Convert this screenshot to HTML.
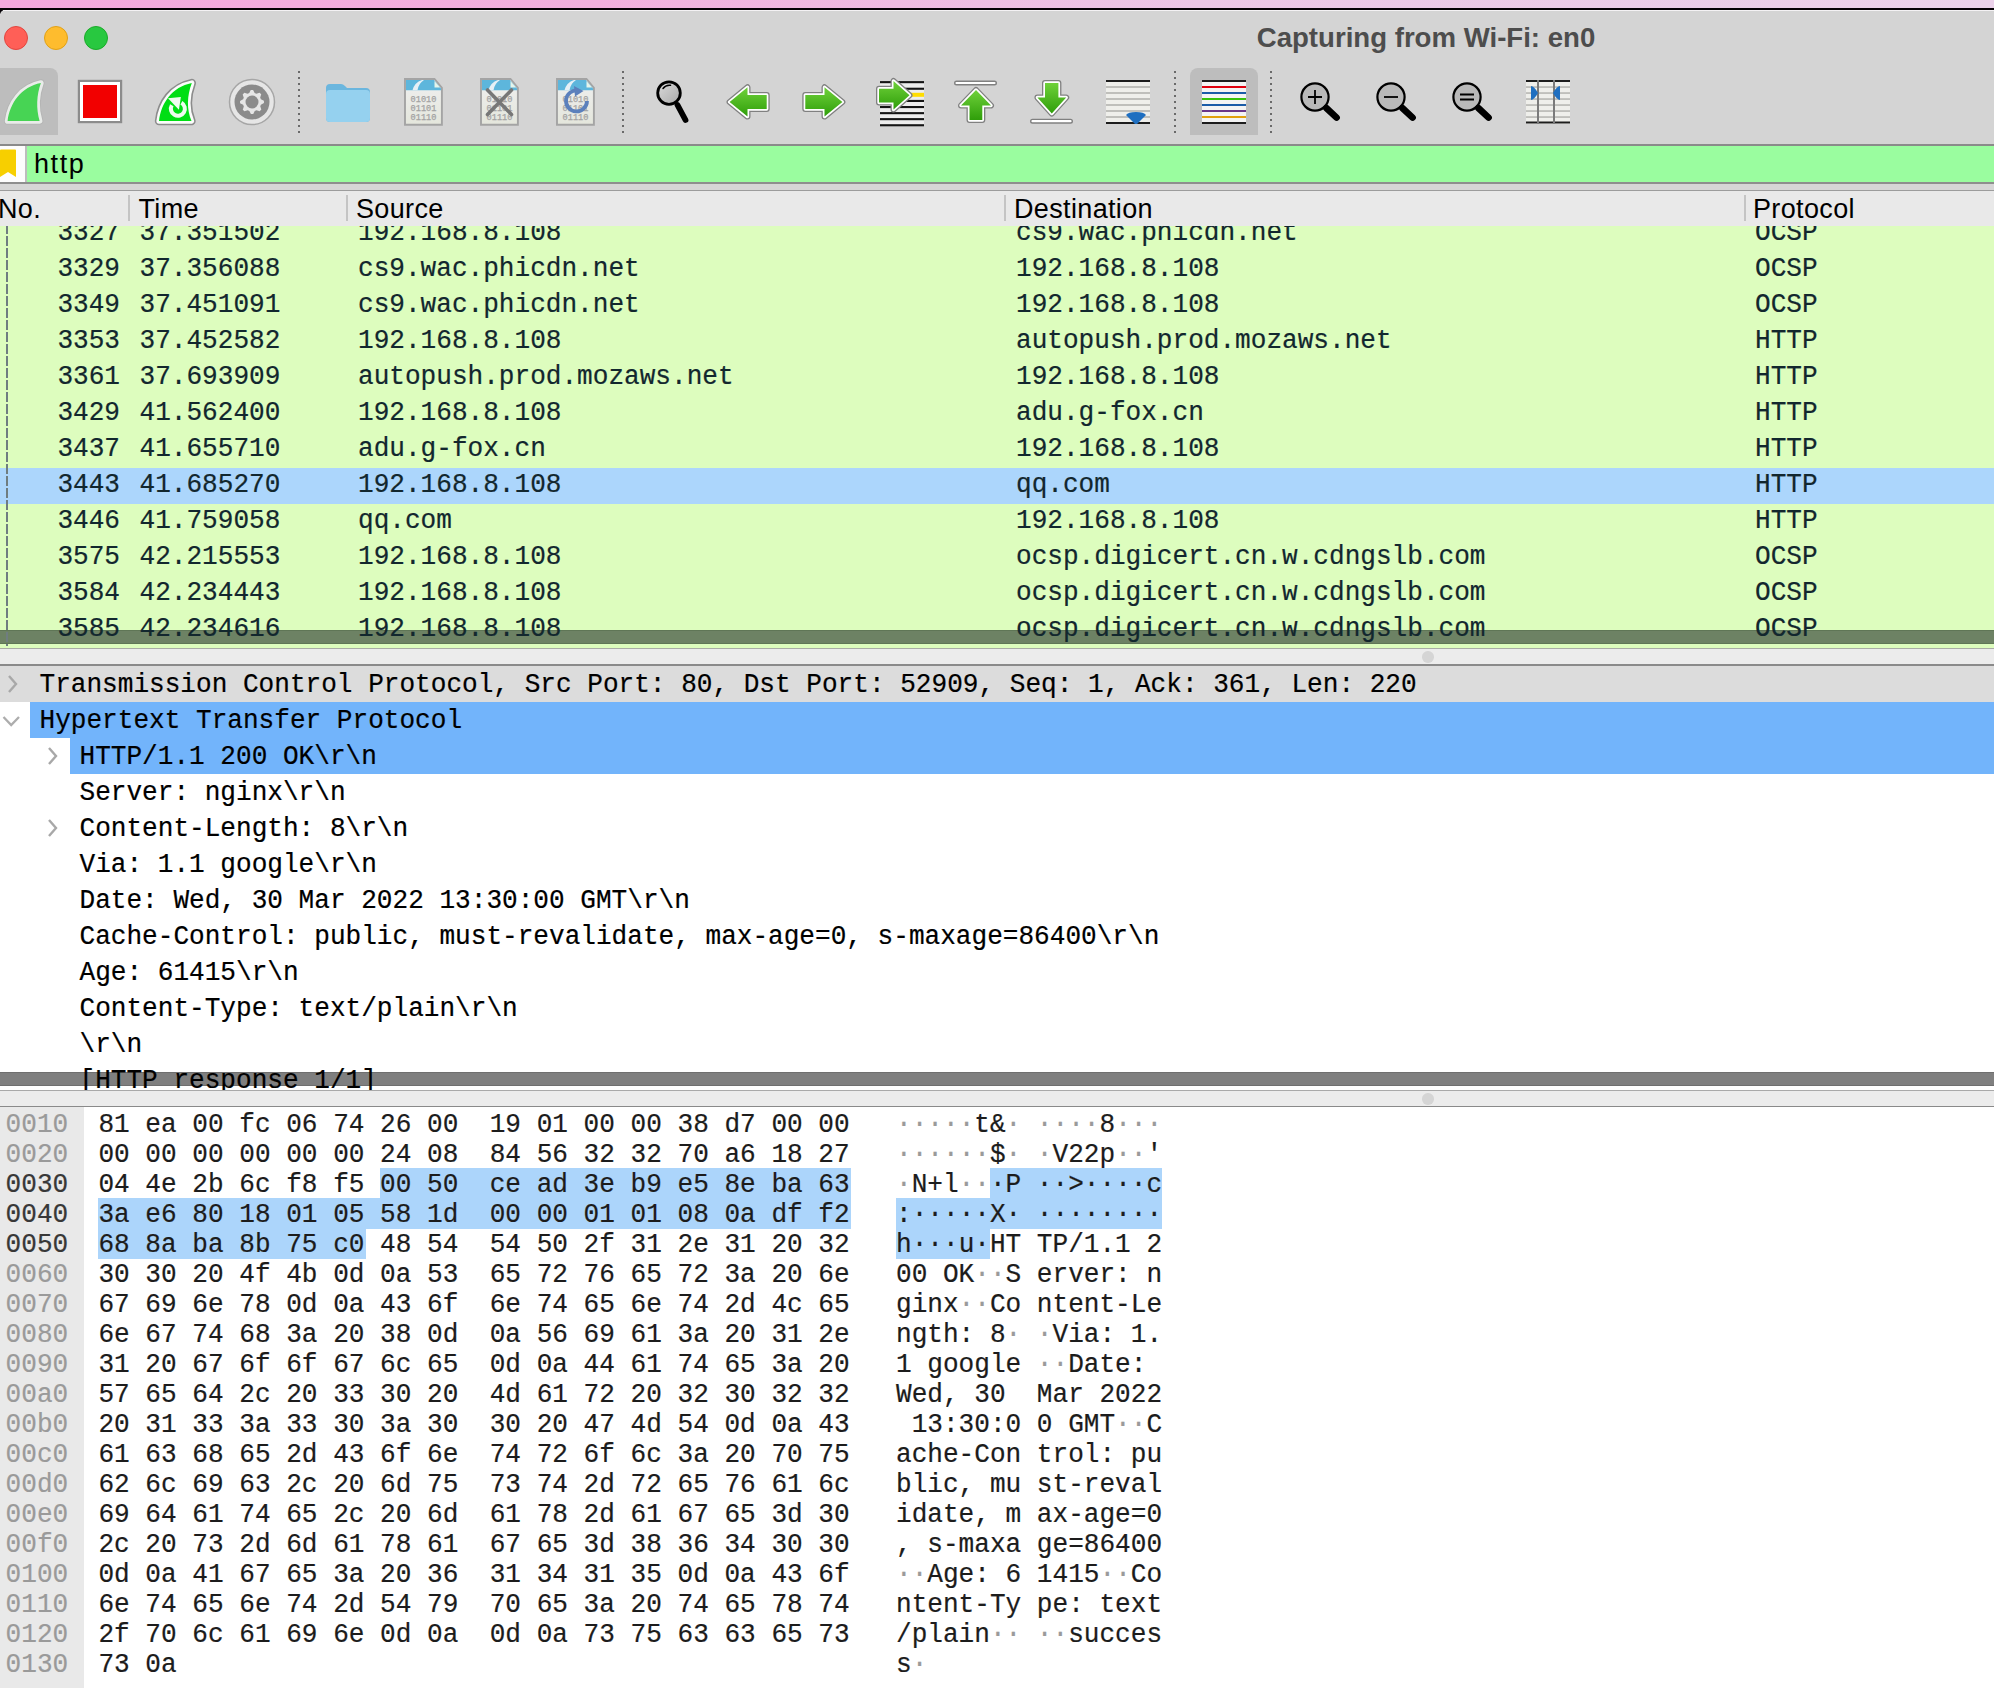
<!DOCTYPE html>
<html><head><meta charset="utf-8"><title>Wireshark</title><style>
html,body{margin:0;padding:0}
body{width:1994px;height:1688px;position:relative;overflow:hidden;background:#fff;font-family:"Liberation Sans",sans-serif}
.a{position:absolute}
</style></head><body>
<div class="a" style="left:0;top:0;width:1994px;height:8px;background:linear-gradient(90deg,#f4a8de 0%,#f2b0de 30%,#ecc6e6 60%,#ebd1ea 100%)"></div>
<div class="a" style="left:0;top:7.8px;width:1994px;height:6px;background:#050005"></div>
<div class="a" style="left:0;top:10px;width:1994px;height:134px;background:#d4d4d4;border-top-left-radius:5px;border-top-right-radius:0"></div>
<div class="a" style="left:3px;top:10px;width:1991px;height:1.2px;background:#f4f2f4"></div>
<div class="a" style="left:4px;top:26px;width:22px;height:22px;border-radius:50%;background:#ff5f57;border:1px solid #e2463f"></div>
<div class="a" style="left:44px;top:26px;width:22px;height:22px;border-radius:50%;background:#febc2e;border:1px solid #e1a116"></div>
<div class="a" style="left:84px;top:26px;width:22px;height:22px;border-radius:50%;background:#28c840;border:1px solid #1aab29"></div>
<div class="a" style="left:1201px;top:21.5px;width:450px;height:36px;line-height:36px;text-align:center;font:bold 27.6px 'Liberation Sans',sans-serif;color:#4d4d4d" id="title">Capturing from Wi-Fi: en0</div>
<div class="a" style="left:0;top:68px;width:58px;height:67px;background:#bdbdbd;border-radius:0 8px 0 0"></div>
<div class="a" style="left:1190px;top:68px;width:68px;height:67px;background:#bdbdbd;border-radius:8px 8px 0 0"></div>
<div class="a" style="left:298px;top:70.5px;width:2px;height:62px;background:repeating-linear-gradient(180deg,#6a6a6a 0,#6a6a6a 2px,transparent 2px,transparent 6px)"></div>
<div class="a" style="left:622px;top:70.5px;width:2px;height:62px;background:repeating-linear-gradient(180deg,#6a6a6a 0,#6a6a6a 2px,transparent 2px,transparent 6px)"></div>
<div class="a" style="left:1174px;top:70.5px;width:2px;height:62px;background:repeating-linear-gradient(180deg,#6a6a6a 0,#6a6a6a 2px,transparent 2px,transparent 6px)"></div>
<div class="a" style="left:1270px;top:70.5px;width:2px;height:62px;background:repeating-linear-gradient(180deg,#6a6a6a 0,#6a6a6a 2px,transparent 2px,transparent 6px)"></div>
<svg class="a" style="left:0;top:0" width="1" height="1"><defs><linearGradient id="gg" x1="0" y1="0" x2="0" y2="1"><stop offset="0" stop-color="#6fd13a"/><stop offset="1" stop-color="#2f9e0a"/></linearGradient><linearGradient id="mg" x1="0" y1="0" x2="0" y2="1"><stop offset="0" stop-color="#d8d8d8"/><stop offset="1" stop-color="#a8a8a8"/></linearGradient></defs></svg>
<svg class="a" style="left:1px;top:77px" width="48" height="50" viewBox="0 0 48 50"><path d="M6.6 43.9 C9 26 20 10 39.9 6.1 C35.5 18 35 32 38.6 43.9 Z" fill="none" stroke="#b4b4b4" stroke-width="7.4" stroke-linejoin="round"/><path d="M6.6 43.9 C9 26 20 10 39.9 6.1 C35.5 18 35 32 38.6 43.9 Z" fill="none" stroke="#e9ece9" stroke-width="5.6" stroke-linejoin="round"/><path d="M6.6 43.9 C9 26 20 10 39.9 6.1 C35.5 18 35 32 38.6 43.9 Z" fill="#47d454"/></svg>
<div class="a" style="left:78.2px;top:79.9px;width:33.3px;height:33.3px;background:#f20000;border:3.5px solid #fff;box-shadow:0 0 0 2.2px #8c8c8c;left:80.4px;top:82.1px"></div>
<svg class="a" style="left:151px;top:76px" width="50" height="52" viewBox="0 0 50 52"><path d="M8 45.1 C10 27 21 11 40.8 7 C36 20 35.5 33 40.5 45.1 Z" fill="none" stroke="#8c8c8c" stroke-width="8.4" stroke-linejoin="round"/><path d="M8 45.1 C10 27 21 11 40.8 7 C36 20 35.5 33 40.5 45.1 Z" fill="none" stroke="#fbfdfb" stroke-width="5.2" stroke-linejoin="round"/><path d="M8 45.1 C10 27 21 11 40.8 7 C36 20 35.5 33 40.5 45.1 Z" fill="#00de14"/><path d="M30.4 26.7 A7 7 0 1 1 20.8 29.3" fill="none" stroke="#effcef" stroke-width="4"/><path d="M17 22.2 L29.9 20.9 L27.9 33.8 Z" fill="#effcef"/></svg>
<svg class="a" style="left:228px;top:78px" width="48" height="48" viewBox="0 0 48 48"><circle cx="24" cy="24" r="22.5" fill="#e6e6e6" stroke="#a6a6a6" stroke-width="1.5"/><circle cx="24" cy="24" r="17.5" fill="#8b8b8b"/><polygon points="24.00,12.00 26.34,12.23 27.56,15.41 29.17,16.27 32.49,15.51 33.98,17.33 32.59,20.44 33.12,22.19 36.00,24.00 35.77,26.34 32.59,27.56 31.73,29.17 32.49,32.49 30.67,33.98 27.56,32.59 25.81,33.12 24.00,36.00 21.66,35.77 20.44,32.59 18.83,31.73 15.51,32.49 14.02,30.67 15.41,27.56 14.88,25.81 12.00,24.00 12.23,21.66 15.41,20.44 16.27,18.83 15.51,15.51 17.33,14.02 20.44,15.41 22.19,14.88" fill="#e6e6e6" transform="rotate(-6 24 24)"/><circle cx="24" cy="24" r="6.5" fill="#8b8b8b"/></svg>
<svg class="a" style="left:324px;top:82px" width="48" height="42" viewBox="0 0 48 42"><path d="M2 6 Q2 2 6 2 L17 2 Q19 2 21 4 L23 6 L42 6 Q46 6 46 10 L46 36 Q46 40 42 40 L6 40 Q2 40 2 36 Z" fill="#6bb6de"/><path d="M2 12 Q2 8 6 8 L42 8 Q46 8 46 12 L46 36 Q46 40 42 40 L6 40 Q2 40 2 36 Z" fill="#95d1ef"/></svg>
<svg class="a" style="left:403px;top:77px" width="41" height="50" viewBox="0 0 41 50"><defs><linearGradient id="pg" x1="0" y1="0" x2="0" y2="1"><stop offset="0" stop-color="#efefef"/><stop offset="1" stop-color="#e4e6dc"/></linearGradient></defs><path d="M2 2 L31.5 2 L38.9 10.9 L38.9 47.8 L2 47.8 Z" fill="url(#pg)" stroke="#a4a4a4" stroke-width="1.9" stroke-linejoin="miter"/><path d="M3 3 L31 3 L38 11.5 L38 13.2 L3 13.2 Z" fill="#5db6dc"/><path d="M31.5 4 L31.5 10.5 L37 10.5 Z" fill="#e6f4ea"/><path d="M9.5 13.2 Q11.5 5.5 19 3 L21 3 Q15.5 6.5 14.5 13.2 Z" fill="#e6f0f6"/><g font-family="Liberation Mono" font-size="8.6" fill="#a2a2a2" stroke="#a2a2a2" stroke-width="0.25"><text x="7.6" y="24.9">01010</text><text x="7.6" y="34.1">01101</text><text x="7.6" y="43.2">01110</text></g></svg>
<svg class="a" style="left:479px;top:77px" width="41" height="50" viewBox="0 0 41 50"><defs><linearGradient id="pg" x1="0" y1="0" x2="0" y2="1"><stop offset="0" stop-color="#efefef"/><stop offset="1" stop-color="#e4e6dc"/></linearGradient></defs><path d="M2 2 L31.5 2 L38.9 10.9 L38.9 47.8 L2 47.8 Z" fill="url(#pg)" stroke="#a4a4a4" stroke-width="1.9" stroke-linejoin="miter"/><path d="M3 3 L31 3 L38 11.5 L38 13.2 L3 13.2 Z" fill="#5db6dc"/><path d="M31.5 4 L31.5 10.5 L37 10.5 Z" fill="#e6f4ea"/><path d="M9.5 13.2 Q11.5 5.5 19 3 L21 3 Q15.5 6.5 14.5 13.2 Z" fill="#e6f0f6"/><g font-family="Liberation Mono" font-size="8.6" fill="#a2a2a2" stroke="#a2a2a2" stroke-width="0.25"><text x="7.6" y="24.9">01010</text><text x="7.6" y="34.1">01101</text><text x="7.6" y="43.2">01110</text></g><path d="M8.5 13 L32.5 37.5 M32.5 13 L8.5 37.5" stroke="#777" stroke-width="3.6" stroke-linecap="round"/></svg>
<svg class="a" style="left:555px;top:77px" width="41" height="50" viewBox="0 0 41 50"><defs><linearGradient id="pg" x1="0" y1="0" x2="0" y2="1"><stop offset="0" stop-color="#efefef"/><stop offset="1" stop-color="#e4e6dc"/></linearGradient></defs><path d="M2 2 L31.5 2 L38.9 10.9 L38.9 47.8 L2 47.8 Z" fill="url(#pg)" stroke="#a4a4a4" stroke-width="1.9" stroke-linejoin="miter"/><path d="M3 3 L31 3 L38 11.5 L38 13.2 L3 13.2 Z" fill="#5db6dc"/><path d="M31.5 4 L31.5 10.5 L37 10.5 Z" fill="#e6f4ea"/><path d="M9.5 13.2 Q11.5 5.5 19 3 L21 3 Q15.5 6.5 14.5 13.2 Z" fill="#e6f0f6"/><g font-family="Liberation Mono" font-size="8.6" fill="#a2a2a2" stroke="#a2a2a2" stroke-width="0.25"><text x="7.6" y="24.9">01010</text><text x="7.6" y="34.1">01101</text><text x="7.6" y="43.2">01110</text></g><path d="M23 13.5 A10.5 10.5 0 1 0 32 24" fill="none" stroke="#5b80bc" stroke-width="3.8"/><path d="M19 9 L28.5 14 L20 19.5 Z" fill="#5b80bc"/></svg>
<svg class="a" style="left:0;top:0" width="1" height="1"><defs><linearGradient id="lens" x1="0" y1="0" x2="1" y2="1"><stop offset="0" stop-color="#dcdcdc"/><stop offset="1" stop-color="#a8a8a8"/></linearGradient></defs></svg>
<svg class="a" style="left:650px;top:75px" width="42" height="52" viewBox="0 0 42 52"><circle cx="19" cy="18.1" r="11.3" fill="url(#lens)" stroke="#000" stroke-width="2.8"/><path d="M13 13.5 A8 8 0 0 1 20.5 10.3" fill="none" stroke="#000" stroke-width="1.5" stroke-linecap="round"/><path d="M27.5 30 L35.5 45" stroke="#000" stroke-width="5.8" stroke-linecap="round"/></svg>
<svg class="a" style="left:724px;top:82px" width="48" height="40" viewBox="0 0 48 40"><path d="M5.6 20 L23.5 5.3 L23.5 13 L42.7 13 L42.7 27 L23.5 27 L23.5 34.6 Z" fill="none" stroke="#808080" stroke-width="6" stroke-linejoin="round"/><path d="M5.6 20 L23.5 5.3 L23.5 13 L42.7 13 L42.7 27 L23.5 27 L23.5 34.6 Z" fill="none" stroke="#ffffff" stroke-width="3.4" stroke-linejoin="round"/><path d="M5.6 20 L23.5 5.3 L23.5 13 L42.7 13 L42.7 27 L23.5 27 L23.5 34.6 Z" fill="url(#gg)"/></svg>
<svg class="a" style="left:800px;top:82px" width="48" height="40" viewBox="0 0 48 40"><path d="M42.4 20 L24.5 5.3 L24.5 13 L5.3 13 L5.3 27 L24.5 27 L24.5 34.6 Z" fill="none" stroke="#808080" stroke-width="6" stroke-linejoin="round"/><path d="M42.4 20 L24.5 5.3 L24.5 13 L5.3 13 L5.3 27 L24.5 27 L24.5 34.6 Z" fill="none" stroke="#ffffff" stroke-width="3.4" stroke-linejoin="round"/><path d="M42.4 20 L24.5 5.3 L24.5 13 L5.3 13 L5.3 27 L24.5 27 L24.5 34.6 Z" fill="url(#gg)"/></svg>
<svg class="a" style="left:874px;top:76px" width="52" height="52" viewBox="0 0 52 52"><rect x="6" y="6" width="44" height="43" fill="#ededed"/><rect x="6" y="5.1" width="44" height="2.1" fill="#151515"/><rect x="6" y="11.7" width="44" height="2.1" fill="#151515"/><rect x="6" y="16.8" width="44" height="4" fill="#ffdd00"/><rect x="6" y="23.9" width="44" height="2.1" fill="#151515"/><rect x="6" y="30.0" width="44" height="2.1" fill="#151515"/><rect x="6" y="36.1" width="44" height="2.1" fill="#151515"/><rect x="6" y="42.1" width="44" height="2.1" fill="#151515"/><rect x="6" y="48.2" width="44" height="2.1" fill="#151515"/><path d="M35.5 19.3 L19.5 5 L19.5 12.7 L5 12.7 L5 26.5 L19.5 26.5 L19.5 33.5 Z" fill="none" stroke="#808080" stroke-width="6" stroke-linejoin="round"/><path d="M35.5 19.3 L19.5 5 L19.5 12.7 L5 12.7 L5 26.5 L19.5 26.5 L19.5 33.5 Z" fill="none" stroke="#ffffff" stroke-width="3.4" stroke-linejoin="round"/><path d="M35.5 19.3 L19.5 5 L19.5 12.7 L5 12.7 L5 26.5 L19.5 26.5 L19.5 33.5 Z" fill="url(#gg)"/></svg>
<svg class="a" style="left:952px;top:78px" width="48" height="48" viewBox="0 0 48 48"><rect x="2.7" y="3.2" width="41.6" height="3.6" rx="1.8" fill="#fff" stroke="#808080" stroke-width="1.4"/><path d="M24 12 L39 27.5 L30.3 27.5 L30.3 42 L17.5 42 L17.5 27.5 L9 27.5 Z" fill="none" stroke="#808080" stroke-width="6" stroke-linejoin="round"/><path d="M24 12 L39 27.5 L30.3 27.5 L30.3 42 L17.5 42 L17.5 27.5 L9 27.5 Z" fill="none" stroke="#ffffff" stroke-width="3.4" stroke-linejoin="round"/><path d="M24 12 L39 27.5 L30.3 27.5 L30.3 42 L17.5 42 L17.5 27.5 L9 27.5 Z" fill="url(#gg)"/></svg>
<svg class="a" style="left:1028px;top:78px" width="48" height="48" viewBox="0 0 48 48"><rect x="2.7" y="41.4" width="41.6" height="3.6" rx="1.8" fill="#fff" stroke="#808080" stroke-width="1.4"/><path d="M23.8 35.5 L38.2 19.5 L30.4 19.5 L30.4 5 L17 5 L17 19.5 L9.4 19.5 Z" fill="none" stroke="#808080" stroke-width="6" stroke-linejoin="round"/><path d="M23.8 35.5 L38.2 19.5 L30.4 19.5 L30.4 5 L17 5 L17 19.5 L9.4 19.5 Z" fill="none" stroke="#ffffff" stroke-width="3.4" stroke-linejoin="round"/><path d="M23.8 35.5 L38.2 19.5 L30.4 19.5 L30.4 5 L17 5 L17 19.5 L9.4 19.5 Z" fill="url(#gg)"/></svg>
<svg class="a" style="left:1106px;top:80px" width="44" height="44" viewBox="0 0 44 44"><rect x="0" y="0" width="44" height="44" fill="#efefeb"/><rect x="0" y="6.2" width="44" height="1.6" fill="#b4b4b0"/><rect x="0" y="12.2" width="44" height="1.6" fill="#b4b4b0"/><rect x="0" y="18.2" width="44" height="1.6" fill="#b4b4b0"/><rect x="0" y="24.2" width="44" height="1.6" fill="#b4b4b0"/><rect x="0" y="30.2" width="44" height="1.6" fill="#b4b4b0"/><rect x="0" y="36.2" width="44" height="1.6" fill="#b4b4b0"/><rect x="0" y="0" width="44" height="2" fill="#1d1d1d"/><rect x="0" y="42" width="44" height="2" fill="#1d1d1d"/><path d="M20 35 Q22 32 30 32 Q38 32 40 35 L31 44 L29 44 Z" fill="#1f6fc0"/></svg>
<svg class="a" style="left:1202px;top:80px" width="44" height="44" viewBox="0 0 44 44"><rect x="0" y="0" width="44" height="44" fill="#f4f4f4"/><rect x="0" y="0.0" width="44" height="2" fill="#1d1d1d"/><rect x="0" y="6.0" width="44" height="2" fill="#e0000e"/><rect x="0" y="12.0" width="44" height="2" fill="#1b5ca8"/><rect x="0" y="18.0" width="44" height="2" fill="#35c20a"/><rect x="0" y="24.0" width="44" height="2" fill="#1b5ca8"/><rect x="0" y="30.0" width="44" height="2" fill="#6a3589"/><rect x="0" y="36.0" width="44" height="2" fill="#e0a00e"/><rect x="0" y="42.0" width="44" height="2" fill="#1d1d1d"/></svg>
<svg class="a" style="left:1298px;top:80px" width="44" height="44" viewBox="0 0 44 44"><circle cx="17" cy="17" r="13.6" fill="#b9b9b9" stroke="#000" stroke-width="2.2"/><path d="M28.3 28 L38.6 37.6" stroke="#000" stroke-width="6.6" stroke-linecap="round"/><path d="M17 10 L17 24 M10 17 L24 17" stroke="#000" stroke-width="1.8"/></svg>
<svg class="a" style="left:1374px;top:80px" width="44" height="44" viewBox="0 0 44 44"><circle cx="17" cy="17" r="13.6" fill="#b9b9b9" stroke="#000" stroke-width="2.2"/><path d="M28.3 28 L38.6 37.6" stroke="#000" stroke-width="6.6" stroke-linecap="round"/><path d="M10 17 L24 17" stroke="#000" stroke-width="1.8"/></svg>
<svg class="a" style="left:1450px;top:80px" width="44" height="44" viewBox="0 0 44 44"><circle cx="17" cy="17" r="13.6" fill="#b9b9b9" stroke="#000" stroke-width="2.2"/><path d="M28.3 28 L38.6 37.6" stroke="#000" stroke-width="6.6" stroke-linecap="round"/><path d="M10 14.5 L24 14.5 M10 19.5 L24 19.5" stroke="#000" stroke-width="1.8"/></svg>
<svg class="a" style="left:1526px;top:80px" width="44" height="44" viewBox="0 0 44 44"><rect x="0" y="0" width="44" height="44" fill="#efefeb"/><rect x="0" y="6.3" width="44" height="1.5" fill="#b4b4b0"/><rect x="0" y="12.3" width="44" height="1.5" fill="#b4b4b0"/><rect x="0" y="18.3" width="44" height="1.5" fill="#b4b4b0"/><rect x="0" y="24.3" width="44" height="1.5" fill="#b4b4b0"/><rect x="0" y="30.3" width="44" height="1.5" fill="#b4b4b0"/><rect x="0" y="36.3" width="44" height="1.5" fill="#b4b4b0"/><rect x="0" y="0" width="44" height="2" fill="#1d1d1d"/><rect x="0" y="41.5" width="44" height="2" fill="#1d1d1d"/><rect x="11" y="0" width="2" height="44" fill="#7a7a7a"/><rect x="27" y="0" width="2" height="44" fill="#7a7a7a"/><path d="M5 6 Q8 6 12 13 Q8 20 5 20 Z" fill="#1f6fc0"/><path d="M34 6 Q31 6 27 13 Q31 20 34 20 Z" fill="#1f6fc0"/></svg>
<div class="a" style="left:0;top:144px;width:1994px;height:2px;background:#8a8a8a"></div>
<div class="a" style="left:0;top:146px;width:1994px;height:36px;background:#9afd9f"></div>
<div class="a" style="left:0;top:146px;width:25px;height:36px;background:#fdfdfd"></div>
<div class="a" style="left:25px;top:146px;width:1.5px;height:36px;background:#bdbdbd"></div>
<svg class="a" style="left:0;top:149px" width="18" height="30" viewBox="0 0 18 30"><path d="M0 1.5 Q0 0.5 1 0.5 L15 0.5 Q16 0.5 16 1.5 L16 28 L8 23 L0 28 Z" fill="#f7cf00"/></svg>
<div class="a" id="ftxt" style="left:34px;top:146px;height:36px;line-height:36px;font-family:'Liberation Sans',sans-serif;font-size:27px;letter-spacing:1.6px;color:#000">http</div>
<div class="a" style="left:0;top:182px;width:1994px;height:1.5px;background:#8e8e8e"></div>
<div class="a" style="left:0;top:183.5px;width:1994px;height:7px;background:#d6d6d6"></div>
<div class="a" style="left:0;top:190px;width:1994px;height:1px;background:#9c9c9c"></div>
<div class="a" style="left:0;top:191px;width:1994px;height:457px;overflow:hidden;background:#ddfdbe">
<div class="a" style="left:57.39px;top:27.06px;height:30px;line-height:30px;font-family:'Liberation Mono',monospace;font-size:26.08px;white-space:pre;-webkit-text-stroke:0.2px currentColor;color:#12272e;transform-origin:0 21.94px;transform:scaleY(1.09);z-index:2;">3327</div>
<div class="a" style="left:139.50px;top:27.06px;height:30px;line-height:30px;font-family:'Liberation Mono',monospace;font-size:26.08px;white-space:pre;-webkit-text-stroke:0.2px currentColor;color:#12272e;transform-origin:0 21.94px;transform:scaleY(1.09);z-index:2;">37.351502</div>
<div class="a" style="left:358.00px;top:27.06px;height:30px;line-height:30px;font-family:'Liberation Mono',monospace;font-size:26.08px;white-space:pre;-webkit-text-stroke:0.2px currentColor;color:#12272e;transform-origin:0 21.94px;transform:scaleY(1.09);z-index:2;">192.168.8.108</div>
<div class="a" style="left:1016.00px;top:27.06px;height:30px;line-height:30px;font-family:'Liberation Mono',monospace;font-size:26.08px;white-space:pre;-webkit-text-stroke:0.2px currentColor;color:#12272e;transform-origin:0 21.94px;transform:scaleY(1.09);z-index:2;">cs9.wac.phicdn.net</div>
<div class="a" style="left:1755.00px;top:27.06px;height:30px;line-height:30px;font-family:'Liberation Mono',monospace;font-size:26.08px;white-space:pre;-webkit-text-stroke:0.2px currentColor;color:#12272e;transform-origin:0 21.94px;transform:scaleY(1.09);z-index:2;">OCSP</div>
<div class="a" style="left:57.39px;top:63.06px;height:30px;line-height:30px;font-family:'Liberation Mono',monospace;font-size:26.08px;white-space:pre;-webkit-text-stroke:0.2px currentColor;color:#12272e;transform-origin:0 21.94px;transform:scaleY(1.09);z-index:2;">3329</div>
<div class="a" style="left:139.50px;top:63.06px;height:30px;line-height:30px;font-family:'Liberation Mono',monospace;font-size:26.08px;white-space:pre;-webkit-text-stroke:0.2px currentColor;color:#12272e;transform-origin:0 21.94px;transform:scaleY(1.09);z-index:2;">37.356088</div>
<div class="a" style="left:358.00px;top:63.06px;height:30px;line-height:30px;font-family:'Liberation Mono',monospace;font-size:26.08px;white-space:pre;-webkit-text-stroke:0.2px currentColor;color:#12272e;transform-origin:0 21.94px;transform:scaleY(1.09);z-index:2;">cs9.wac.phicdn.net</div>
<div class="a" style="left:1016.00px;top:63.06px;height:30px;line-height:30px;font-family:'Liberation Mono',monospace;font-size:26.08px;white-space:pre;-webkit-text-stroke:0.2px currentColor;color:#12272e;transform-origin:0 21.94px;transform:scaleY(1.09);z-index:2;">192.168.8.108</div>
<div class="a" style="left:1755.00px;top:63.06px;height:30px;line-height:30px;font-family:'Liberation Mono',monospace;font-size:26.08px;white-space:pre;-webkit-text-stroke:0.2px currentColor;color:#12272e;transform-origin:0 21.94px;transform:scaleY(1.09);z-index:2;">OCSP</div>
<div class="a" style="left:57.39px;top:99.06px;height:30px;line-height:30px;font-family:'Liberation Mono',monospace;font-size:26.08px;white-space:pre;-webkit-text-stroke:0.2px currentColor;color:#12272e;transform-origin:0 21.94px;transform:scaleY(1.09);z-index:2;">3349</div>
<div class="a" style="left:139.50px;top:99.06px;height:30px;line-height:30px;font-family:'Liberation Mono',monospace;font-size:26.08px;white-space:pre;-webkit-text-stroke:0.2px currentColor;color:#12272e;transform-origin:0 21.94px;transform:scaleY(1.09);z-index:2;">37.451091</div>
<div class="a" style="left:358.00px;top:99.06px;height:30px;line-height:30px;font-family:'Liberation Mono',monospace;font-size:26.08px;white-space:pre;-webkit-text-stroke:0.2px currentColor;color:#12272e;transform-origin:0 21.94px;transform:scaleY(1.09);z-index:2;">cs9.wac.phicdn.net</div>
<div class="a" style="left:1016.00px;top:99.06px;height:30px;line-height:30px;font-family:'Liberation Mono',monospace;font-size:26.08px;white-space:pre;-webkit-text-stroke:0.2px currentColor;color:#12272e;transform-origin:0 21.94px;transform:scaleY(1.09);z-index:2;">192.168.8.108</div>
<div class="a" style="left:1755.00px;top:99.06px;height:30px;line-height:30px;font-family:'Liberation Mono',monospace;font-size:26.08px;white-space:pre;-webkit-text-stroke:0.2px currentColor;color:#12272e;transform-origin:0 21.94px;transform:scaleY(1.09);z-index:2;">OCSP</div>
<div class="a" style="left:57.39px;top:135.06px;height:30px;line-height:30px;font-family:'Liberation Mono',monospace;font-size:26.08px;white-space:pre;-webkit-text-stroke:0.2px currentColor;color:#12272e;transform-origin:0 21.94px;transform:scaleY(1.09);z-index:2;">3353</div>
<div class="a" style="left:139.50px;top:135.06px;height:30px;line-height:30px;font-family:'Liberation Mono',monospace;font-size:26.08px;white-space:pre;-webkit-text-stroke:0.2px currentColor;color:#12272e;transform-origin:0 21.94px;transform:scaleY(1.09);z-index:2;">37.452582</div>
<div class="a" style="left:358.00px;top:135.06px;height:30px;line-height:30px;font-family:'Liberation Mono',monospace;font-size:26.08px;white-space:pre;-webkit-text-stroke:0.2px currentColor;color:#12272e;transform-origin:0 21.94px;transform:scaleY(1.09);z-index:2;">192.168.8.108</div>
<div class="a" style="left:1016.00px;top:135.06px;height:30px;line-height:30px;font-family:'Liberation Mono',monospace;font-size:26.08px;white-space:pre;-webkit-text-stroke:0.2px currentColor;color:#12272e;transform-origin:0 21.94px;transform:scaleY(1.09);z-index:2;">autopush.prod.mozaws.net</div>
<div class="a" style="left:1755.00px;top:135.06px;height:30px;line-height:30px;font-family:'Liberation Mono',monospace;font-size:26.08px;white-space:pre;-webkit-text-stroke:0.2px currentColor;color:#12272e;transform-origin:0 21.94px;transform:scaleY(1.09);z-index:2;">HTTP</div>
<div class="a" style="left:57.39px;top:171.06px;height:30px;line-height:30px;font-family:'Liberation Mono',monospace;font-size:26.08px;white-space:pre;-webkit-text-stroke:0.2px currentColor;color:#12272e;transform-origin:0 21.94px;transform:scaleY(1.09);z-index:2;">3361</div>
<div class="a" style="left:139.50px;top:171.06px;height:30px;line-height:30px;font-family:'Liberation Mono',monospace;font-size:26.08px;white-space:pre;-webkit-text-stroke:0.2px currentColor;color:#12272e;transform-origin:0 21.94px;transform:scaleY(1.09);z-index:2;">37.693909</div>
<div class="a" style="left:358.00px;top:171.06px;height:30px;line-height:30px;font-family:'Liberation Mono',monospace;font-size:26.08px;white-space:pre;-webkit-text-stroke:0.2px currentColor;color:#12272e;transform-origin:0 21.94px;transform:scaleY(1.09);z-index:2;">autopush.prod.mozaws.net</div>
<div class="a" style="left:1016.00px;top:171.06px;height:30px;line-height:30px;font-family:'Liberation Mono',monospace;font-size:26.08px;white-space:pre;-webkit-text-stroke:0.2px currentColor;color:#12272e;transform-origin:0 21.94px;transform:scaleY(1.09);z-index:2;">192.168.8.108</div>
<div class="a" style="left:1755.00px;top:171.06px;height:30px;line-height:30px;font-family:'Liberation Mono',monospace;font-size:26.08px;white-space:pre;-webkit-text-stroke:0.2px currentColor;color:#12272e;transform-origin:0 21.94px;transform:scaleY(1.09);z-index:2;">HTTP</div>
<div class="a" style="left:57.39px;top:207.06px;height:30px;line-height:30px;font-family:'Liberation Mono',monospace;font-size:26.08px;white-space:pre;-webkit-text-stroke:0.2px currentColor;color:#12272e;transform-origin:0 21.94px;transform:scaleY(1.09);z-index:2;">3429</div>
<div class="a" style="left:139.50px;top:207.06px;height:30px;line-height:30px;font-family:'Liberation Mono',monospace;font-size:26.08px;white-space:pre;-webkit-text-stroke:0.2px currentColor;color:#12272e;transform-origin:0 21.94px;transform:scaleY(1.09);z-index:2;">41.562400</div>
<div class="a" style="left:358.00px;top:207.06px;height:30px;line-height:30px;font-family:'Liberation Mono',monospace;font-size:26.08px;white-space:pre;-webkit-text-stroke:0.2px currentColor;color:#12272e;transform-origin:0 21.94px;transform:scaleY(1.09);z-index:2;">192.168.8.108</div>
<div class="a" style="left:1016.00px;top:207.06px;height:30px;line-height:30px;font-family:'Liberation Mono',monospace;font-size:26.08px;white-space:pre;-webkit-text-stroke:0.2px currentColor;color:#12272e;transform-origin:0 21.94px;transform:scaleY(1.09);z-index:2;">adu.g-fox.cn</div>
<div class="a" style="left:1755.00px;top:207.06px;height:30px;line-height:30px;font-family:'Liberation Mono',monospace;font-size:26.08px;white-space:pre;-webkit-text-stroke:0.2px currentColor;color:#12272e;transform-origin:0 21.94px;transform:scaleY(1.09);z-index:2;">HTTP</div>
<div class="a" style="left:57.39px;top:243.06px;height:30px;line-height:30px;font-family:'Liberation Mono',monospace;font-size:26.08px;white-space:pre;-webkit-text-stroke:0.2px currentColor;color:#12272e;transform-origin:0 21.94px;transform:scaleY(1.09);z-index:2;">3437</div>
<div class="a" style="left:139.50px;top:243.06px;height:30px;line-height:30px;font-family:'Liberation Mono',monospace;font-size:26.08px;white-space:pre;-webkit-text-stroke:0.2px currentColor;color:#12272e;transform-origin:0 21.94px;transform:scaleY(1.09);z-index:2;">41.655710</div>
<div class="a" style="left:358.00px;top:243.06px;height:30px;line-height:30px;font-family:'Liberation Mono',monospace;font-size:26.08px;white-space:pre;-webkit-text-stroke:0.2px currentColor;color:#12272e;transform-origin:0 21.94px;transform:scaleY(1.09);z-index:2;">adu.g-fox.cn</div>
<div class="a" style="left:1016.00px;top:243.06px;height:30px;line-height:30px;font-family:'Liberation Mono',monospace;font-size:26.08px;white-space:pre;-webkit-text-stroke:0.2px currentColor;color:#12272e;transform-origin:0 21.94px;transform:scaleY(1.09);z-index:2;">192.168.8.108</div>
<div class="a" style="left:1755.00px;top:243.06px;height:30px;line-height:30px;font-family:'Liberation Mono',monospace;font-size:26.08px;white-space:pre;-webkit-text-stroke:0.2px currentColor;color:#12272e;transform-origin:0 21.94px;transform:scaleY(1.09);z-index:2;">HTTP</div>
<div class="a" style="left:0;top:277px;width:1994px;height:36px;background:#acd6fc"></div>
<div class="a" style="left:57.39px;top:279.06px;height:30px;line-height:30px;font-family:'Liberation Mono',monospace;font-size:26.08px;white-space:pre;-webkit-text-stroke:0.2px currentColor;color:#12272e;transform-origin:0 21.94px;transform:scaleY(1.09);z-index:2;">3443</div>
<div class="a" style="left:139.50px;top:279.06px;height:30px;line-height:30px;font-family:'Liberation Mono',monospace;font-size:26.08px;white-space:pre;-webkit-text-stroke:0.2px currentColor;color:#12272e;transform-origin:0 21.94px;transform:scaleY(1.09);z-index:2;">41.685270</div>
<div class="a" style="left:358.00px;top:279.06px;height:30px;line-height:30px;font-family:'Liberation Mono',monospace;font-size:26.08px;white-space:pre;-webkit-text-stroke:0.2px currentColor;color:#12272e;transform-origin:0 21.94px;transform:scaleY(1.09);z-index:2;">192.168.8.108</div>
<div class="a" style="left:1016.00px;top:279.06px;height:30px;line-height:30px;font-family:'Liberation Mono',monospace;font-size:26.08px;white-space:pre;-webkit-text-stroke:0.2px currentColor;color:#12272e;transform-origin:0 21.94px;transform:scaleY(1.09);z-index:2;">qq.com</div>
<div class="a" style="left:1755.00px;top:279.06px;height:30px;line-height:30px;font-family:'Liberation Mono',monospace;font-size:26.08px;white-space:pre;-webkit-text-stroke:0.2px currentColor;color:#12272e;transform-origin:0 21.94px;transform:scaleY(1.09);z-index:2;">HTTP</div>
<div class="a" style="left:57.39px;top:315.06px;height:30px;line-height:30px;font-family:'Liberation Mono',monospace;font-size:26.08px;white-space:pre;-webkit-text-stroke:0.2px currentColor;color:#12272e;transform-origin:0 21.94px;transform:scaleY(1.09);z-index:2;">3446</div>
<div class="a" style="left:139.50px;top:315.06px;height:30px;line-height:30px;font-family:'Liberation Mono',monospace;font-size:26.08px;white-space:pre;-webkit-text-stroke:0.2px currentColor;color:#12272e;transform-origin:0 21.94px;transform:scaleY(1.09);z-index:2;">41.759058</div>
<div class="a" style="left:358.00px;top:315.06px;height:30px;line-height:30px;font-family:'Liberation Mono',monospace;font-size:26.08px;white-space:pre;-webkit-text-stroke:0.2px currentColor;color:#12272e;transform-origin:0 21.94px;transform:scaleY(1.09);z-index:2;">qq.com</div>
<div class="a" style="left:1016.00px;top:315.06px;height:30px;line-height:30px;font-family:'Liberation Mono',monospace;font-size:26.08px;white-space:pre;-webkit-text-stroke:0.2px currentColor;color:#12272e;transform-origin:0 21.94px;transform:scaleY(1.09);z-index:2;">192.168.8.108</div>
<div class="a" style="left:1755.00px;top:315.06px;height:30px;line-height:30px;font-family:'Liberation Mono',monospace;font-size:26.08px;white-space:pre;-webkit-text-stroke:0.2px currentColor;color:#12272e;transform-origin:0 21.94px;transform:scaleY(1.09);z-index:2;">HTTP</div>
<div class="a" style="left:57.39px;top:351.06px;height:30px;line-height:30px;font-family:'Liberation Mono',monospace;font-size:26.08px;white-space:pre;-webkit-text-stroke:0.2px currentColor;color:#12272e;transform-origin:0 21.94px;transform:scaleY(1.09);z-index:2;">3575</div>
<div class="a" style="left:139.50px;top:351.06px;height:30px;line-height:30px;font-family:'Liberation Mono',monospace;font-size:26.08px;white-space:pre;-webkit-text-stroke:0.2px currentColor;color:#12272e;transform-origin:0 21.94px;transform:scaleY(1.09);z-index:2;">42.215553</div>
<div class="a" style="left:358.00px;top:351.06px;height:30px;line-height:30px;font-family:'Liberation Mono',monospace;font-size:26.08px;white-space:pre;-webkit-text-stroke:0.2px currentColor;color:#12272e;transform-origin:0 21.94px;transform:scaleY(1.09);z-index:2;">192.168.8.108</div>
<div class="a" style="left:1016.00px;top:351.06px;height:30px;line-height:30px;font-family:'Liberation Mono',monospace;font-size:26.08px;white-space:pre;-webkit-text-stroke:0.2px currentColor;color:#12272e;transform-origin:0 21.94px;transform:scaleY(1.09);z-index:2;">ocsp.digicert.cn.w.cdngslb.com</div>
<div class="a" style="left:1755.00px;top:351.06px;height:30px;line-height:30px;font-family:'Liberation Mono',monospace;font-size:26.08px;white-space:pre;-webkit-text-stroke:0.2px currentColor;color:#12272e;transform-origin:0 21.94px;transform:scaleY(1.09);z-index:2;">OCSP</div>
<div class="a" style="left:57.39px;top:387.06px;height:30px;line-height:30px;font-family:'Liberation Mono',monospace;font-size:26.08px;white-space:pre;-webkit-text-stroke:0.2px currentColor;color:#12272e;transform-origin:0 21.94px;transform:scaleY(1.09);z-index:2;">3584</div>
<div class="a" style="left:139.50px;top:387.06px;height:30px;line-height:30px;font-family:'Liberation Mono',monospace;font-size:26.08px;white-space:pre;-webkit-text-stroke:0.2px currentColor;color:#12272e;transform-origin:0 21.94px;transform:scaleY(1.09);z-index:2;">42.234443</div>
<div class="a" style="left:358.00px;top:387.06px;height:30px;line-height:30px;font-family:'Liberation Mono',monospace;font-size:26.08px;white-space:pre;-webkit-text-stroke:0.2px currentColor;color:#12272e;transform-origin:0 21.94px;transform:scaleY(1.09);z-index:2;">192.168.8.108</div>
<div class="a" style="left:1016.00px;top:387.06px;height:30px;line-height:30px;font-family:'Liberation Mono',monospace;font-size:26.08px;white-space:pre;-webkit-text-stroke:0.2px currentColor;color:#12272e;transform-origin:0 21.94px;transform:scaleY(1.09);z-index:2;">ocsp.digicert.cn.w.cdngslb.com</div>
<div class="a" style="left:1755.00px;top:387.06px;height:30px;line-height:30px;font-family:'Liberation Mono',monospace;font-size:26.08px;white-space:pre;-webkit-text-stroke:0.2px currentColor;color:#12272e;transform-origin:0 21.94px;transform:scaleY(1.09);z-index:2;">OCSP</div>
<div class="a" style="left:57.39px;top:423.06px;height:30px;line-height:30px;font-family:'Liberation Mono',monospace;font-size:26.08px;white-space:pre;-webkit-text-stroke:0.2px currentColor;color:#12272e;transform-origin:0 21.94px;transform:scaleY(1.09);z-index:2;">3585</div>
<div class="a" style="left:139.50px;top:423.06px;height:30px;line-height:30px;font-family:'Liberation Mono',monospace;font-size:26.08px;white-space:pre;-webkit-text-stroke:0.2px currentColor;color:#12272e;transform-origin:0 21.94px;transform:scaleY(1.09);z-index:2;">42.234616</div>
<div class="a" style="left:358.00px;top:423.06px;height:30px;line-height:30px;font-family:'Liberation Mono',monospace;font-size:26.08px;white-space:pre;-webkit-text-stroke:0.2px currentColor;color:#12272e;transform-origin:0 21.94px;transform:scaleY(1.09);z-index:2;">192.168.8.108</div>
<div class="a" style="left:1016.00px;top:423.06px;height:30px;line-height:30px;font-family:'Liberation Mono',monospace;font-size:26.08px;white-space:pre;-webkit-text-stroke:0.2px currentColor;color:#12272e;transform-origin:0 21.94px;transform:scaleY(1.09);z-index:2;">ocsp.digicert.cn.w.cdngslb.com</div>
<div class="a" style="left:1755.00px;top:423.06px;height:30px;line-height:30px;font-family:'Liberation Mono',monospace;font-size:26.08px;white-space:pre;-webkit-text-stroke:0.2px currentColor;color:#12272e;transform-origin:0 21.94px;transform:scaleY(1.09);z-index:2;">OCSP</div>
<div class="a" style="left:6px;top:33px;width:2px;height:422px;background:repeating-linear-gradient(180deg,#6f7d80 0,#6f7d80 10px,transparent 10px,transparent 12px);z-index:2"></div>
<div class="a" style="left:0;top:439px;width:1994px;height:14px;background:#6d8264;border-top:1px solid #5f7656;border-bottom:1px solid #5f7656;box-sizing:border-box;z-index:1"></div>
<div class="a" style="left:0;top:0;width:1994px;height:34.6px;background:#e9e9e9;z-index:3"></div>
<div class="a" style="left:-2px;top:0;height:34.6px;line-height:36px;font-family:'Liberation Sans',sans-serif;font-size:27px;letter-spacing:0.35px;color:#000;z-index:4">No.</div>
<div class="a" style="left:138.5px;top:0;height:34.6px;line-height:36px;font-family:'Liberation Sans',sans-serif;font-size:27px;letter-spacing:0.35px;color:#000;z-index:4">Time</div>
<div class="a" style="left:356px;top:0;height:34.6px;line-height:36px;font-family:'Liberation Sans',sans-serif;font-size:27px;letter-spacing:0.35px;color:#000;z-index:4">Source</div>
<div class="a" style="left:1014px;top:0;height:34.6px;line-height:36px;font-family:'Liberation Sans',sans-serif;font-size:27px;letter-spacing:0.35px;color:#000;z-index:4">Destination</div>
<div class="a" style="left:1753px;top:0;height:34.6px;line-height:36px;font-family:'Liberation Sans',sans-serif;font-size:27px;letter-spacing:0.35px;color:#000;z-index:4">Protocol</div>
<div class="a" style="left:128px;top:4px;width:2px;height:26px;background:#c4c4c4;z-index:4"></div>
<div class="a" style="left:345.7px;top:4px;width:2px;height:26px;background:#c4c4c4;z-index:4"></div>
<div class="a" style="left:1004px;top:4px;width:2px;height:26px;background:#c4c4c4;z-index:4"></div>
<div class="a" style="left:1744.3px;top:4px;width:2px;height:26px;background:#c4c4c4;z-index:4"></div>
</div>
<div class="a" style="left:0;top:648px;width:1994px;height:1px;background:#a9ada6"></div>
<div class="a" style="left:0;top:649px;width:1994px;height:15px;background:#ececec"></div>
<div class="a" style="left:1422.2px;top:651.2px;width:11.5px;height:11.5px;border-radius:50%;background:#d5d5d5"></div>
<div class="a" style="left:0;top:664px;width:1994px;height:1.5px;background:#8a8a8a"></div>
<div class="a" style="left:0;top:665.5px;width:1994px;height:424.5px;overflow:hidden;background:#fff">
<div class="a" style="left:0;top:0.00px;width:1994px;height:36px;background:#dcdcdc"></div>
<div class="a" style="left:39.50px;top:4.56px;height:30px;line-height:30px;font-family:'Liberation Mono',monospace;font-size:26.08px;white-space:pre;-webkit-text-stroke:0.2px currentColor;color:#000;transform-origin:0 21.94px;transform:scaleY(1.09);z-index:2;">Transmission Control Protocol, Src Port: 80, Dst Port: 52909, Seq: 1, Ack: 361, Len: 220</div>
<svg class="a" style="left:5px;top:8.20px" width="16" height="20"><path d="M4 2 L11 10 L4 18" fill="none" stroke="#a8a8a8" stroke-width="2.4"/></svg>
<div class="a" style="left:30px;top:36.20px;width:1964px;height:36px;background:#72b4fb"></div>
<div class="a" style="left:39.50px;top:40.56px;height:30px;line-height:30px;font-family:'Liberation Mono',monospace;font-size:26.08px;white-space:pre;-webkit-text-stroke:0.2px currentColor;color:#000;transform-origin:0 21.94px;transform:scaleY(1.09);z-index:2;">Hypertext Transfer Protocol</div>
<svg class="a" style="left:1px;top:47.20px" width="20" height="16"><path d="M2.5 4 L10.2 12 L18 4" fill="none" stroke="#adadad" stroke-width="2.3"/></svg>
<div class="a" style="left:70px;top:72.20px;width:1924px;height:36px;background:#72b4fb"></div>
<div class="a" style="left:79.50px;top:76.56px;height:30px;line-height:30px;font-family:'Liberation Mono',monospace;font-size:26.08px;white-space:pre;-webkit-text-stroke:0.2px currentColor;color:#000;transform-origin:0 21.94px;transform:scaleY(1.09);z-index:2;">HTTP/1.1 200 OK\r\n</div>
<svg class="a" style="left:45px;top:80.20px" width="16" height="20"><path d="M4 2 L11 10 L4 18" fill="none" stroke="#a8a8a8" stroke-width="2.4"/></svg>
<div class="a" style="left:79.50px;top:112.56px;height:30px;line-height:30px;font-family:'Liberation Mono',monospace;font-size:26.08px;white-space:pre;-webkit-text-stroke:0.2px currentColor;color:#000;transform-origin:0 21.94px;transform:scaleY(1.09);z-index:2;">Server: nginx\r\n</div>
<div class="a" style="left:79.50px;top:148.56px;height:30px;line-height:30px;font-family:'Liberation Mono',monospace;font-size:26.08px;white-space:pre;-webkit-text-stroke:0.2px currentColor;color:#000;transform-origin:0 21.94px;transform:scaleY(1.09);z-index:2;">Content-Length: 8\r\n</div>
<svg class="a" style="left:45px;top:152.20px" width="16" height="20"><path d="M4 2 L11 10 L4 18" fill="none" stroke="#a8a8a8" stroke-width="2.4"/></svg>
<div class="a" style="left:79.50px;top:184.56px;height:30px;line-height:30px;font-family:'Liberation Mono',monospace;font-size:26.08px;white-space:pre;-webkit-text-stroke:0.2px currentColor;color:#000;transform-origin:0 21.94px;transform:scaleY(1.09);z-index:2;">Via: 1.1 google\r\n</div>
<div class="a" style="left:79.50px;top:220.56px;height:30px;line-height:30px;font-family:'Liberation Mono',monospace;font-size:26.08px;white-space:pre;-webkit-text-stroke:0.2px currentColor;color:#000;transform-origin:0 21.94px;transform:scaleY(1.09);z-index:2;">Date: Wed, 30 Mar 2022 13:30:00 GMT\r\n</div>
<div class="a" style="left:79.50px;top:256.56px;height:30px;line-height:30px;font-family:'Liberation Mono',monospace;font-size:26.08px;white-space:pre;-webkit-text-stroke:0.2px currentColor;color:#000;transform-origin:0 21.94px;transform:scaleY(1.09);z-index:2;">Cache-Control: public, must-revalidate, max-age=0, s-maxage=86400\r\n</div>
<div class="a" style="left:79.50px;top:292.56px;height:30px;line-height:30px;font-family:'Liberation Mono',monospace;font-size:26.08px;white-space:pre;-webkit-text-stroke:0.2px currentColor;color:#000;transform-origin:0 21.94px;transform:scaleY(1.09);z-index:2;">Age: 61415\r\n</div>
<div class="a" style="left:79.50px;top:328.56px;height:30px;line-height:30px;font-family:'Liberation Mono',monospace;font-size:26.08px;white-space:pre;-webkit-text-stroke:0.2px currentColor;color:#000;transform-origin:0 21.94px;transform:scaleY(1.09);z-index:2;">Content-Type: text/plain\r\n</div>
<div class="a" style="left:79.50px;top:364.56px;height:30px;line-height:30px;font-family:'Liberation Mono',monospace;font-size:26.08px;white-space:pre;-webkit-text-stroke:0.2px currentColor;color:#000;transform-origin:0 21.94px;transform:scaleY(1.09);z-index:2;">\r\n</div>
<div class="a" style="left:79.50px;top:400.56px;height:30px;line-height:30px;font-family:'Liberation Mono',monospace;font-size:26.08px;white-space:pre;-webkit-text-stroke:0.2px currentColor;color:#000;transform-origin:0 21.94px;transform:scaleY(1.09);z-index:2;">[HTTP response 1/1]</div>
<div class="a" style="left:0;top:406.5px;width:1994px;height:14px;background:#7f7f7f;border-top:1px solid #6f6f6f;border-bottom:1px solid #6f6f6f;box-sizing:border-box;z-index:1"></div>
</div>
<div class="a" style="left:0;top:1090px;width:1994px;height:1px;background:#a9a9a9"></div>
<div class="a" style="left:0;top:1091px;width:1994px;height:15px;background:#ececec"></div>
<div class="a" style="left:1422.2px;top:1093px;width:11.5px;height:11.5px;border-radius:50%;background:#d5d5d5"></div>
<div class="a" style="left:0;top:1106px;width:1994px;height:1.3px;background:#8a8a8a"></div>
<div class="a" style="left:0;top:1107.3px;width:84px;height:581px;background:#e9e9e9"></div>
<div class="a" style="left:5.60px;top:1109.56px;height:30px;line-height:30px;font-family:'Liberation Mono',monospace;font-size:26.08px;white-space:pre;-webkit-text-stroke:0.2px currentColor;color:#9a9a9a;transform-origin:0 21.94px;transform:scaleY(1.09);z-index:2;">0010</div>
<div class="a" style="left:98.40px;top:1109.56px;height:30px;line-height:30px;font-family:'Liberation Mono',monospace;font-size:26.08px;white-space:pre;-webkit-text-stroke:0.2px currentColor;color:#1c1c1c;transform-origin:0 21.94px;transform:scaleY(1.09);z-index:2;">81 ea 00 fc 06 74 26 00</div>
<div class="a" style="left:489.70px;top:1109.56px;height:30px;line-height:30px;font-family:'Liberation Mono',monospace;font-size:26.08px;white-space:pre;-webkit-text-stroke:0.2px currentColor;color:#1c1c1c;transform-origin:0 21.94px;transform:scaleY(1.09);z-index:2;">19 01 00 00 38 d7 00 00</div>
<div class="a" style="left:896.00px;top:1109.56px;height:30px;line-height:30px;font-family:'Liberation Mono',monospace;font-size:26.08px;white-space:pre;-webkit-text-stroke:0.2px currentColor;color:#1c1c1c;transform-origin:0 21.94px;transform:scaleY(1.09)"><span style="color:#9a9a9a">&#183;</span><span style="color:#9a9a9a">&#183;</span><span style="color:#9a9a9a">&#183;</span><span style="color:#9a9a9a">&#183;</span><span style="color:#9a9a9a">&#183;</span>t&amp;<span style="color:#9a9a9a">&#183;</span></div>
<div class="a" style="left:1036.87px;top:1109.56px;height:30px;line-height:30px;font-family:'Liberation Mono',monospace;font-size:26.08px;white-space:pre;-webkit-text-stroke:0.2px currentColor;color:#1c1c1c;transform-origin:0 21.94px;transform:scaleY(1.09)"><span style="color:#9a9a9a">&#183;</span><span style="color:#9a9a9a">&#183;</span><span style="color:#9a9a9a">&#183;</span><span style="color:#9a9a9a">&#183;</span>8<span style="color:#9a9a9a">&#183;</span><span style="color:#9a9a9a">&#183;</span><span style="color:#9a9a9a">&#183;</span></div>
<div class="a" style="left:5.60px;top:1139.56px;height:30px;line-height:30px;font-family:'Liberation Mono',monospace;font-size:26.08px;white-space:pre;-webkit-text-stroke:0.2px currentColor;color:#9a9a9a;transform-origin:0 21.94px;transform:scaleY(1.09);z-index:2;">0020</div>
<div class="a" style="left:98.40px;top:1139.56px;height:30px;line-height:30px;font-family:'Liberation Mono',monospace;font-size:26.08px;white-space:pre;-webkit-text-stroke:0.2px currentColor;color:#1c1c1c;transform-origin:0 21.94px;transform:scaleY(1.09);z-index:2;">00 00 00 00 00 00 24 08</div>
<div class="a" style="left:489.70px;top:1139.56px;height:30px;line-height:30px;font-family:'Liberation Mono',monospace;font-size:26.08px;white-space:pre;-webkit-text-stroke:0.2px currentColor;color:#1c1c1c;transform-origin:0 21.94px;transform:scaleY(1.09);z-index:2;">84 56 32 32 70 a6 18 27</div>
<div class="a" style="left:896.00px;top:1139.56px;height:30px;line-height:30px;font-family:'Liberation Mono',monospace;font-size:26.08px;white-space:pre;-webkit-text-stroke:0.2px currentColor;color:#1c1c1c;transform-origin:0 21.94px;transform:scaleY(1.09)"><span style="color:#9a9a9a">&#183;</span><span style="color:#9a9a9a">&#183;</span><span style="color:#9a9a9a">&#183;</span><span style="color:#9a9a9a">&#183;</span><span style="color:#9a9a9a">&#183;</span><span style="color:#9a9a9a">&#183;</span>$<span style="color:#9a9a9a">&#183;</span></div>
<div class="a" style="left:1036.87px;top:1139.56px;height:30px;line-height:30px;font-family:'Liberation Mono',monospace;font-size:26.08px;white-space:pre;-webkit-text-stroke:0.2px currentColor;color:#1c1c1c;transform-origin:0 21.94px;transform:scaleY(1.09)"><span style="color:#9a9a9a">&#183;</span>V22p<span style="color:#9a9a9a">&#183;</span><span style="color:#9a9a9a">&#183;</span>&#x27;</div>
<div class="a" style="left:380.14px;top:1168px;width:471.06px;height:30.5px;background:#acd5fb"></div>
<div class="a" style="left:989.91px;top:1168px;width:172.17px;height:30.5px;background:#acd5fb"></div>
<div class="a" style="left:5.60px;top:1169.56px;height:30px;line-height:30px;font-family:'Liberation Mono',monospace;font-size:26.08px;white-space:pre;-webkit-text-stroke:0.2px currentColor;color:#383838;transform-origin:0 21.94px;transform:scaleY(1.09);z-index:2;">0030</div>
<div class="a" style="left:98.40px;top:1169.56px;height:30px;line-height:30px;font-family:'Liberation Mono',monospace;font-size:26.08px;white-space:pre;-webkit-text-stroke:0.2px currentColor;color:#1c1c1c;transform-origin:0 21.94px;transform:scaleY(1.09);z-index:2;">04 4e 2b 6c f8 f5 00 50</div>
<div class="a" style="left:489.70px;top:1169.56px;height:30px;line-height:30px;font-family:'Liberation Mono',monospace;font-size:26.08px;white-space:pre;-webkit-text-stroke:0.2px currentColor;color:#1c1c1c;transform-origin:0 21.94px;transform:scaleY(1.09);z-index:2;">ce ad 3e b9 e5 8e ba 63</div>
<div class="a" style="left:896.00px;top:1169.56px;height:30px;line-height:30px;font-family:'Liberation Mono',monospace;font-size:26.08px;white-space:pre;-webkit-text-stroke:0.2px currentColor;color:#1c1c1c;transform-origin:0 21.94px;transform:scaleY(1.09)"><span style="color:#9a9a9a">&#183;</span>N+l<span style="color:#9a9a9a">&#183;</span><span style="color:#9a9a9a">&#183;</span><span style="color:#1c1c1c">&#183;</span>P</div>
<div class="a" style="left:1036.87px;top:1169.56px;height:30px;line-height:30px;font-family:'Liberation Mono',monospace;font-size:26.08px;white-space:pre;-webkit-text-stroke:0.2px currentColor;color:#1c1c1c;transform-origin:0 21.94px;transform:scaleY(1.09)"><span style="color:#1c1c1c">&#183;</span><span style="color:#1c1c1c">&#183;</span>&gt;<span style="color:#1c1c1c">&#183;</span><span style="color:#1c1c1c">&#183;</span><span style="color:#1c1c1c">&#183;</span><span style="color:#1c1c1c">&#183;</span>c</div>
<div class="a" style="left:98.40px;top:1198px;width:752.80px;height:30.5px;background:#acd5fb"></div>
<div class="a" style="left:896.00px;top:1198px;width:266.08px;height:30.5px;background:#acd5fb"></div>
<div class="a" style="left:5.60px;top:1199.56px;height:30px;line-height:30px;font-family:'Liberation Mono',monospace;font-size:26.08px;white-space:pre;-webkit-text-stroke:0.2px currentColor;color:#383838;transform-origin:0 21.94px;transform:scaleY(1.09);z-index:2;">0040</div>
<div class="a" style="left:98.40px;top:1199.56px;height:30px;line-height:30px;font-family:'Liberation Mono',monospace;font-size:26.08px;white-space:pre;-webkit-text-stroke:0.2px currentColor;color:#1c1c1c;transform-origin:0 21.94px;transform:scaleY(1.09);z-index:2;">3a e6 80 18 01 05 58 1d</div>
<div class="a" style="left:489.70px;top:1199.56px;height:30px;line-height:30px;font-family:'Liberation Mono',monospace;font-size:26.08px;white-space:pre;-webkit-text-stroke:0.2px currentColor;color:#1c1c1c;transform-origin:0 21.94px;transform:scaleY(1.09);z-index:2;">00 00 01 01 08 0a df f2</div>
<div class="a" style="left:896.00px;top:1199.56px;height:30px;line-height:30px;font-family:'Liberation Mono',monospace;font-size:26.08px;white-space:pre;-webkit-text-stroke:0.2px currentColor;color:#1c1c1c;transform-origin:0 21.94px;transform:scaleY(1.09)">:<span style="color:#1c1c1c">&#183;</span><span style="color:#1c1c1c">&#183;</span><span style="color:#1c1c1c">&#183;</span><span style="color:#1c1c1c">&#183;</span><span style="color:#1c1c1c">&#183;</span>X<span style="color:#1c1c1c">&#183;</span></div>
<div class="a" style="left:1036.87px;top:1199.56px;height:30px;line-height:30px;font-family:'Liberation Mono',monospace;font-size:26.08px;white-space:pre;-webkit-text-stroke:0.2px currentColor;color:#1c1c1c;transform-origin:0 21.94px;transform:scaleY(1.09)"><span style="color:#1c1c1c">&#183;</span><span style="color:#1c1c1c">&#183;</span><span style="color:#1c1c1c">&#183;</span><span style="color:#1c1c1c">&#183;</span><span style="color:#1c1c1c">&#183;</span><span style="color:#1c1c1c">&#183;</span><span style="color:#1c1c1c">&#183;</span><span style="color:#1c1c1c">&#183;</span></div>
<div class="a" style="left:98.40px;top:1228px;width:267.28px;height:31px;background:#acd5fb"></div>
<div class="a" style="left:896.00px;top:1228px;width:93.91px;height:31px;background:#acd5fb"></div>
<div class="a" style="left:5.60px;top:1229.56px;height:30px;line-height:30px;font-family:'Liberation Mono',monospace;font-size:26.08px;white-space:pre;-webkit-text-stroke:0.2px currentColor;color:#383838;transform-origin:0 21.94px;transform:scaleY(1.09);z-index:2;">0050</div>
<div class="a" style="left:98.40px;top:1229.56px;height:30px;line-height:30px;font-family:'Liberation Mono',monospace;font-size:26.08px;white-space:pre;-webkit-text-stroke:0.2px currentColor;color:#1c1c1c;transform-origin:0 21.94px;transform:scaleY(1.09);z-index:2;">68 8a ba 8b 75 c0 48 54</div>
<div class="a" style="left:489.70px;top:1229.56px;height:30px;line-height:30px;font-family:'Liberation Mono',monospace;font-size:26.08px;white-space:pre;-webkit-text-stroke:0.2px currentColor;color:#1c1c1c;transform-origin:0 21.94px;transform:scaleY(1.09);z-index:2;">54 50 2f 31 2e 31 20 32</div>
<div class="a" style="left:896.00px;top:1229.56px;height:30px;line-height:30px;font-family:'Liberation Mono',monospace;font-size:26.08px;white-space:pre;-webkit-text-stroke:0.2px currentColor;color:#1c1c1c;transform-origin:0 21.94px;transform:scaleY(1.09)">h<span style="color:#1c1c1c">&#183;</span><span style="color:#1c1c1c">&#183;</span><span style="color:#1c1c1c">&#183;</span>u<span style="color:#1c1c1c">&#183;</span>HT</div>
<div class="a" style="left:1036.87px;top:1229.56px;height:30px;line-height:30px;font-family:'Liberation Mono',monospace;font-size:26.08px;white-space:pre;-webkit-text-stroke:0.2px currentColor;color:#1c1c1c;transform-origin:0 21.94px;transform:scaleY(1.09)">TP/1.1 2</div>
<div class="a" style="left:5.60px;top:1259.56px;height:30px;line-height:30px;font-family:'Liberation Mono',monospace;font-size:26.08px;white-space:pre;-webkit-text-stroke:0.2px currentColor;color:#9a9a9a;transform-origin:0 21.94px;transform:scaleY(1.09);z-index:2;">0060</div>
<div class="a" style="left:98.40px;top:1259.56px;height:30px;line-height:30px;font-family:'Liberation Mono',monospace;font-size:26.08px;white-space:pre;-webkit-text-stroke:0.2px currentColor;color:#1c1c1c;transform-origin:0 21.94px;transform:scaleY(1.09);z-index:2;">30 30 20 4f 4b 0d 0a 53</div>
<div class="a" style="left:489.70px;top:1259.56px;height:30px;line-height:30px;font-family:'Liberation Mono',monospace;font-size:26.08px;white-space:pre;-webkit-text-stroke:0.2px currentColor;color:#1c1c1c;transform-origin:0 21.94px;transform:scaleY(1.09);z-index:2;">65 72 76 65 72 3a 20 6e</div>
<div class="a" style="left:896.00px;top:1259.56px;height:30px;line-height:30px;font-family:'Liberation Mono',monospace;font-size:26.08px;white-space:pre;-webkit-text-stroke:0.2px currentColor;color:#1c1c1c;transform-origin:0 21.94px;transform:scaleY(1.09)">00 OK<span style="color:#9a9a9a">&#183;</span><span style="color:#9a9a9a">&#183;</span>S</div>
<div class="a" style="left:1036.87px;top:1259.56px;height:30px;line-height:30px;font-family:'Liberation Mono',monospace;font-size:26.08px;white-space:pre;-webkit-text-stroke:0.2px currentColor;color:#1c1c1c;transform-origin:0 21.94px;transform:scaleY(1.09)">erver: n</div>
<div class="a" style="left:5.60px;top:1289.56px;height:30px;line-height:30px;font-family:'Liberation Mono',monospace;font-size:26.08px;white-space:pre;-webkit-text-stroke:0.2px currentColor;color:#9a9a9a;transform-origin:0 21.94px;transform:scaleY(1.09);z-index:2;">0070</div>
<div class="a" style="left:98.40px;top:1289.56px;height:30px;line-height:30px;font-family:'Liberation Mono',monospace;font-size:26.08px;white-space:pre;-webkit-text-stroke:0.2px currentColor;color:#1c1c1c;transform-origin:0 21.94px;transform:scaleY(1.09);z-index:2;">67 69 6e 78 0d 0a 43 6f</div>
<div class="a" style="left:489.70px;top:1289.56px;height:30px;line-height:30px;font-family:'Liberation Mono',monospace;font-size:26.08px;white-space:pre;-webkit-text-stroke:0.2px currentColor;color:#1c1c1c;transform-origin:0 21.94px;transform:scaleY(1.09);z-index:2;">6e 74 65 6e 74 2d 4c 65</div>
<div class="a" style="left:896.00px;top:1289.56px;height:30px;line-height:30px;font-family:'Liberation Mono',monospace;font-size:26.08px;white-space:pre;-webkit-text-stroke:0.2px currentColor;color:#1c1c1c;transform-origin:0 21.94px;transform:scaleY(1.09)">ginx<span style="color:#9a9a9a">&#183;</span><span style="color:#9a9a9a">&#183;</span>Co</div>
<div class="a" style="left:1036.87px;top:1289.56px;height:30px;line-height:30px;font-family:'Liberation Mono',monospace;font-size:26.08px;white-space:pre;-webkit-text-stroke:0.2px currentColor;color:#1c1c1c;transform-origin:0 21.94px;transform:scaleY(1.09)">ntent-Le</div>
<div class="a" style="left:5.60px;top:1319.56px;height:30px;line-height:30px;font-family:'Liberation Mono',monospace;font-size:26.08px;white-space:pre;-webkit-text-stroke:0.2px currentColor;color:#9a9a9a;transform-origin:0 21.94px;transform:scaleY(1.09);z-index:2;">0080</div>
<div class="a" style="left:98.40px;top:1319.56px;height:30px;line-height:30px;font-family:'Liberation Mono',monospace;font-size:26.08px;white-space:pre;-webkit-text-stroke:0.2px currentColor;color:#1c1c1c;transform-origin:0 21.94px;transform:scaleY(1.09);z-index:2;">6e 67 74 68 3a 20 38 0d</div>
<div class="a" style="left:489.70px;top:1319.56px;height:30px;line-height:30px;font-family:'Liberation Mono',monospace;font-size:26.08px;white-space:pre;-webkit-text-stroke:0.2px currentColor;color:#1c1c1c;transform-origin:0 21.94px;transform:scaleY(1.09);z-index:2;">0a 56 69 61 3a 20 31 2e</div>
<div class="a" style="left:896.00px;top:1319.56px;height:30px;line-height:30px;font-family:'Liberation Mono',monospace;font-size:26.08px;white-space:pre;-webkit-text-stroke:0.2px currentColor;color:#1c1c1c;transform-origin:0 21.94px;transform:scaleY(1.09)">ngth: 8<span style="color:#9a9a9a">&#183;</span></div>
<div class="a" style="left:1036.87px;top:1319.56px;height:30px;line-height:30px;font-family:'Liberation Mono',monospace;font-size:26.08px;white-space:pre;-webkit-text-stroke:0.2px currentColor;color:#1c1c1c;transform-origin:0 21.94px;transform:scaleY(1.09)"><span style="color:#9a9a9a">&#183;</span>Via: 1.</div>
<div class="a" style="left:5.60px;top:1349.56px;height:30px;line-height:30px;font-family:'Liberation Mono',monospace;font-size:26.08px;white-space:pre;-webkit-text-stroke:0.2px currentColor;color:#9a9a9a;transform-origin:0 21.94px;transform:scaleY(1.09);z-index:2;">0090</div>
<div class="a" style="left:98.40px;top:1349.56px;height:30px;line-height:30px;font-family:'Liberation Mono',monospace;font-size:26.08px;white-space:pre;-webkit-text-stroke:0.2px currentColor;color:#1c1c1c;transform-origin:0 21.94px;transform:scaleY(1.09);z-index:2;">31 20 67 6f 6f 67 6c 65</div>
<div class="a" style="left:489.70px;top:1349.56px;height:30px;line-height:30px;font-family:'Liberation Mono',monospace;font-size:26.08px;white-space:pre;-webkit-text-stroke:0.2px currentColor;color:#1c1c1c;transform-origin:0 21.94px;transform:scaleY(1.09);z-index:2;">0d 0a 44 61 74 65 3a 20</div>
<div class="a" style="left:896.00px;top:1349.56px;height:30px;line-height:30px;font-family:'Liberation Mono',monospace;font-size:26.08px;white-space:pre;-webkit-text-stroke:0.2px currentColor;color:#1c1c1c;transform-origin:0 21.94px;transform:scaleY(1.09)">1 google</div>
<div class="a" style="left:1036.87px;top:1349.56px;height:30px;line-height:30px;font-family:'Liberation Mono',monospace;font-size:26.08px;white-space:pre;-webkit-text-stroke:0.2px currentColor;color:#1c1c1c;transform-origin:0 21.94px;transform:scaleY(1.09)"><span style="color:#9a9a9a">&#183;</span><span style="color:#9a9a9a">&#183;</span>Date: </div>
<div class="a" style="left:5.60px;top:1379.56px;height:30px;line-height:30px;font-family:'Liberation Mono',monospace;font-size:26.08px;white-space:pre;-webkit-text-stroke:0.2px currentColor;color:#9a9a9a;transform-origin:0 21.94px;transform:scaleY(1.09);z-index:2;">00a0</div>
<div class="a" style="left:98.40px;top:1379.56px;height:30px;line-height:30px;font-family:'Liberation Mono',monospace;font-size:26.08px;white-space:pre;-webkit-text-stroke:0.2px currentColor;color:#1c1c1c;transform-origin:0 21.94px;transform:scaleY(1.09);z-index:2;">57 65 64 2c 20 33 30 20</div>
<div class="a" style="left:489.70px;top:1379.56px;height:30px;line-height:30px;font-family:'Liberation Mono',monospace;font-size:26.08px;white-space:pre;-webkit-text-stroke:0.2px currentColor;color:#1c1c1c;transform-origin:0 21.94px;transform:scaleY(1.09);z-index:2;">4d 61 72 20 32 30 32 32</div>
<div class="a" style="left:896.00px;top:1379.56px;height:30px;line-height:30px;font-family:'Liberation Mono',monospace;font-size:26.08px;white-space:pre;-webkit-text-stroke:0.2px currentColor;color:#1c1c1c;transform-origin:0 21.94px;transform:scaleY(1.09)">Wed, 30 </div>
<div class="a" style="left:1036.87px;top:1379.56px;height:30px;line-height:30px;font-family:'Liberation Mono',monospace;font-size:26.08px;white-space:pre;-webkit-text-stroke:0.2px currentColor;color:#1c1c1c;transform-origin:0 21.94px;transform:scaleY(1.09)">Mar 2022</div>
<div class="a" style="left:5.60px;top:1409.56px;height:30px;line-height:30px;font-family:'Liberation Mono',monospace;font-size:26.08px;white-space:pre;-webkit-text-stroke:0.2px currentColor;color:#9a9a9a;transform-origin:0 21.94px;transform:scaleY(1.09);z-index:2;">00b0</div>
<div class="a" style="left:98.40px;top:1409.56px;height:30px;line-height:30px;font-family:'Liberation Mono',monospace;font-size:26.08px;white-space:pre;-webkit-text-stroke:0.2px currentColor;color:#1c1c1c;transform-origin:0 21.94px;transform:scaleY(1.09);z-index:2;">20 31 33 3a 33 30 3a 30</div>
<div class="a" style="left:489.70px;top:1409.56px;height:30px;line-height:30px;font-family:'Liberation Mono',monospace;font-size:26.08px;white-space:pre;-webkit-text-stroke:0.2px currentColor;color:#1c1c1c;transform-origin:0 21.94px;transform:scaleY(1.09);z-index:2;">30 20 47 4d 54 0d 0a 43</div>
<div class="a" style="left:896.00px;top:1409.56px;height:30px;line-height:30px;font-family:'Liberation Mono',monospace;font-size:26.08px;white-space:pre;-webkit-text-stroke:0.2px currentColor;color:#1c1c1c;transform-origin:0 21.94px;transform:scaleY(1.09)"> 13:30:0</div>
<div class="a" style="left:1036.87px;top:1409.56px;height:30px;line-height:30px;font-family:'Liberation Mono',monospace;font-size:26.08px;white-space:pre;-webkit-text-stroke:0.2px currentColor;color:#1c1c1c;transform-origin:0 21.94px;transform:scaleY(1.09)">0 GMT<span style="color:#9a9a9a">&#183;</span><span style="color:#9a9a9a">&#183;</span>C</div>
<div class="a" style="left:5.60px;top:1439.56px;height:30px;line-height:30px;font-family:'Liberation Mono',monospace;font-size:26.08px;white-space:pre;-webkit-text-stroke:0.2px currentColor;color:#9a9a9a;transform-origin:0 21.94px;transform:scaleY(1.09);z-index:2;">00c0</div>
<div class="a" style="left:98.40px;top:1439.56px;height:30px;line-height:30px;font-family:'Liberation Mono',monospace;font-size:26.08px;white-space:pre;-webkit-text-stroke:0.2px currentColor;color:#1c1c1c;transform-origin:0 21.94px;transform:scaleY(1.09);z-index:2;">61 63 68 65 2d 43 6f 6e</div>
<div class="a" style="left:489.70px;top:1439.56px;height:30px;line-height:30px;font-family:'Liberation Mono',monospace;font-size:26.08px;white-space:pre;-webkit-text-stroke:0.2px currentColor;color:#1c1c1c;transform-origin:0 21.94px;transform:scaleY(1.09);z-index:2;">74 72 6f 6c 3a 20 70 75</div>
<div class="a" style="left:896.00px;top:1439.56px;height:30px;line-height:30px;font-family:'Liberation Mono',monospace;font-size:26.08px;white-space:pre;-webkit-text-stroke:0.2px currentColor;color:#1c1c1c;transform-origin:0 21.94px;transform:scaleY(1.09)">ache-Con</div>
<div class="a" style="left:1036.87px;top:1439.56px;height:30px;line-height:30px;font-family:'Liberation Mono',monospace;font-size:26.08px;white-space:pre;-webkit-text-stroke:0.2px currentColor;color:#1c1c1c;transform-origin:0 21.94px;transform:scaleY(1.09)">trol: pu</div>
<div class="a" style="left:5.60px;top:1469.56px;height:30px;line-height:30px;font-family:'Liberation Mono',monospace;font-size:26.08px;white-space:pre;-webkit-text-stroke:0.2px currentColor;color:#9a9a9a;transform-origin:0 21.94px;transform:scaleY(1.09);z-index:2;">00d0</div>
<div class="a" style="left:98.40px;top:1469.56px;height:30px;line-height:30px;font-family:'Liberation Mono',monospace;font-size:26.08px;white-space:pre;-webkit-text-stroke:0.2px currentColor;color:#1c1c1c;transform-origin:0 21.94px;transform:scaleY(1.09);z-index:2;">62 6c 69 63 2c 20 6d 75</div>
<div class="a" style="left:489.70px;top:1469.56px;height:30px;line-height:30px;font-family:'Liberation Mono',monospace;font-size:26.08px;white-space:pre;-webkit-text-stroke:0.2px currentColor;color:#1c1c1c;transform-origin:0 21.94px;transform:scaleY(1.09);z-index:2;">73 74 2d 72 65 76 61 6c</div>
<div class="a" style="left:896.00px;top:1469.56px;height:30px;line-height:30px;font-family:'Liberation Mono',monospace;font-size:26.08px;white-space:pre;-webkit-text-stroke:0.2px currentColor;color:#1c1c1c;transform-origin:0 21.94px;transform:scaleY(1.09)">blic, mu</div>
<div class="a" style="left:1036.87px;top:1469.56px;height:30px;line-height:30px;font-family:'Liberation Mono',monospace;font-size:26.08px;white-space:pre;-webkit-text-stroke:0.2px currentColor;color:#1c1c1c;transform-origin:0 21.94px;transform:scaleY(1.09)">st-reval</div>
<div class="a" style="left:5.60px;top:1499.56px;height:30px;line-height:30px;font-family:'Liberation Mono',monospace;font-size:26.08px;white-space:pre;-webkit-text-stroke:0.2px currentColor;color:#9a9a9a;transform-origin:0 21.94px;transform:scaleY(1.09);z-index:2;">00e0</div>
<div class="a" style="left:98.40px;top:1499.56px;height:30px;line-height:30px;font-family:'Liberation Mono',monospace;font-size:26.08px;white-space:pre;-webkit-text-stroke:0.2px currentColor;color:#1c1c1c;transform-origin:0 21.94px;transform:scaleY(1.09);z-index:2;">69 64 61 74 65 2c 20 6d</div>
<div class="a" style="left:489.70px;top:1499.56px;height:30px;line-height:30px;font-family:'Liberation Mono',monospace;font-size:26.08px;white-space:pre;-webkit-text-stroke:0.2px currentColor;color:#1c1c1c;transform-origin:0 21.94px;transform:scaleY(1.09);z-index:2;">61 78 2d 61 67 65 3d 30</div>
<div class="a" style="left:896.00px;top:1499.56px;height:30px;line-height:30px;font-family:'Liberation Mono',monospace;font-size:26.08px;white-space:pre;-webkit-text-stroke:0.2px currentColor;color:#1c1c1c;transform-origin:0 21.94px;transform:scaleY(1.09)">idate, m</div>
<div class="a" style="left:1036.87px;top:1499.56px;height:30px;line-height:30px;font-family:'Liberation Mono',monospace;font-size:26.08px;white-space:pre;-webkit-text-stroke:0.2px currentColor;color:#1c1c1c;transform-origin:0 21.94px;transform:scaleY(1.09)">ax-age=0</div>
<div class="a" style="left:5.60px;top:1529.56px;height:30px;line-height:30px;font-family:'Liberation Mono',monospace;font-size:26.08px;white-space:pre;-webkit-text-stroke:0.2px currentColor;color:#9a9a9a;transform-origin:0 21.94px;transform:scaleY(1.09);z-index:2;">00f0</div>
<div class="a" style="left:98.40px;top:1529.56px;height:30px;line-height:30px;font-family:'Liberation Mono',monospace;font-size:26.08px;white-space:pre;-webkit-text-stroke:0.2px currentColor;color:#1c1c1c;transform-origin:0 21.94px;transform:scaleY(1.09);z-index:2;">2c 20 73 2d 6d 61 78 61</div>
<div class="a" style="left:489.70px;top:1529.56px;height:30px;line-height:30px;font-family:'Liberation Mono',monospace;font-size:26.08px;white-space:pre;-webkit-text-stroke:0.2px currentColor;color:#1c1c1c;transform-origin:0 21.94px;transform:scaleY(1.09);z-index:2;">67 65 3d 38 36 34 30 30</div>
<div class="a" style="left:896.00px;top:1529.56px;height:30px;line-height:30px;font-family:'Liberation Mono',monospace;font-size:26.08px;white-space:pre;-webkit-text-stroke:0.2px currentColor;color:#1c1c1c;transform-origin:0 21.94px;transform:scaleY(1.09)">, s-maxa</div>
<div class="a" style="left:1036.87px;top:1529.56px;height:30px;line-height:30px;font-family:'Liberation Mono',monospace;font-size:26.08px;white-space:pre;-webkit-text-stroke:0.2px currentColor;color:#1c1c1c;transform-origin:0 21.94px;transform:scaleY(1.09)">ge=86400</div>
<div class="a" style="left:5.60px;top:1559.56px;height:30px;line-height:30px;font-family:'Liberation Mono',monospace;font-size:26.08px;white-space:pre;-webkit-text-stroke:0.2px currentColor;color:#9a9a9a;transform-origin:0 21.94px;transform:scaleY(1.09);z-index:2;">0100</div>
<div class="a" style="left:98.40px;top:1559.56px;height:30px;line-height:30px;font-family:'Liberation Mono',monospace;font-size:26.08px;white-space:pre;-webkit-text-stroke:0.2px currentColor;color:#1c1c1c;transform-origin:0 21.94px;transform:scaleY(1.09);z-index:2;">0d 0a 41 67 65 3a 20 36</div>
<div class="a" style="left:489.70px;top:1559.56px;height:30px;line-height:30px;font-family:'Liberation Mono',monospace;font-size:26.08px;white-space:pre;-webkit-text-stroke:0.2px currentColor;color:#1c1c1c;transform-origin:0 21.94px;transform:scaleY(1.09);z-index:2;">31 34 31 35 0d 0a 43 6f</div>
<div class="a" style="left:896.00px;top:1559.56px;height:30px;line-height:30px;font-family:'Liberation Mono',monospace;font-size:26.08px;white-space:pre;-webkit-text-stroke:0.2px currentColor;color:#1c1c1c;transform-origin:0 21.94px;transform:scaleY(1.09)"><span style="color:#9a9a9a">&#183;</span><span style="color:#9a9a9a">&#183;</span>Age: 6</div>
<div class="a" style="left:1036.87px;top:1559.56px;height:30px;line-height:30px;font-family:'Liberation Mono',monospace;font-size:26.08px;white-space:pre;-webkit-text-stroke:0.2px currentColor;color:#1c1c1c;transform-origin:0 21.94px;transform:scaleY(1.09)">1415<span style="color:#9a9a9a">&#183;</span><span style="color:#9a9a9a">&#183;</span>Co</div>
<div class="a" style="left:5.60px;top:1589.56px;height:30px;line-height:30px;font-family:'Liberation Mono',monospace;font-size:26.08px;white-space:pre;-webkit-text-stroke:0.2px currentColor;color:#9a9a9a;transform-origin:0 21.94px;transform:scaleY(1.09);z-index:2;">0110</div>
<div class="a" style="left:98.40px;top:1589.56px;height:30px;line-height:30px;font-family:'Liberation Mono',monospace;font-size:26.08px;white-space:pre;-webkit-text-stroke:0.2px currentColor;color:#1c1c1c;transform-origin:0 21.94px;transform:scaleY(1.09);z-index:2;">6e 74 65 6e 74 2d 54 79</div>
<div class="a" style="left:489.70px;top:1589.56px;height:30px;line-height:30px;font-family:'Liberation Mono',monospace;font-size:26.08px;white-space:pre;-webkit-text-stroke:0.2px currentColor;color:#1c1c1c;transform-origin:0 21.94px;transform:scaleY(1.09);z-index:2;">70 65 3a 20 74 65 78 74</div>
<div class="a" style="left:896.00px;top:1589.56px;height:30px;line-height:30px;font-family:'Liberation Mono',monospace;font-size:26.08px;white-space:pre;-webkit-text-stroke:0.2px currentColor;color:#1c1c1c;transform-origin:0 21.94px;transform:scaleY(1.09)">ntent-Ty</div>
<div class="a" style="left:1036.87px;top:1589.56px;height:30px;line-height:30px;font-family:'Liberation Mono',monospace;font-size:26.08px;white-space:pre;-webkit-text-stroke:0.2px currentColor;color:#1c1c1c;transform-origin:0 21.94px;transform:scaleY(1.09)">pe: text</div>
<div class="a" style="left:5.60px;top:1619.56px;height:30px;line-height:30px;font-family:'Liberation Mono',monospace;font-size:26.08px;white-space:pre;-webkit-text-stroke:0.2px currentColor;color:#9a9a9a;transform-origin:0 21.94px;transform:scaleY(1.09);z-index:2;">0120</div>
<div class="a" style="left:98.40px;top:1619.56px;height:30px;line-height:30px;font-family:'Liberation Mono',monospace;font-size:26.08px;white-space:pre;-webkit-text-stroke:0.2px currentColor;color:#1c1c1c;transform-origin:0 21.94px;transform:scaleY(1.09);z-index:2;">2f 70 6c 61 69 6e 0d 0a</div>
<div class="a" style="left:489.70px;top:1619.56px;height:30px;line-height:30px;font-family:'Liberation Mono',monospace;font-size:26.08px;white-space:pre;-webkit-text-stroke:0.2px currentColor;color:#1c1c1c;transform-origin:0 21.94px;transform:scaleY(1.09);z-index:2;">0d 0a 73 75 63 63 65 73</div>
<div class="a" style="left:896.00px;top:1619.56px;height:30px;line-height:30px;font-family:'Liberation Mono',monospace;font-size:26.08px;white-space:pre;-webkit-text-stroke:0.2px currentColor;color:#1c1c1c;transform-origin:0 21.94px;transform:scaleY(1.09)">/plain<span style="color:#9a9a9a">&#183;</span><span style="color:#9a9a9a">&#183;</span></div>
<div class="a" style="left:1036.87px;top:1619.56px;height:30px;line-height:30px;font-family:'Liberation Mono',monospace;font-size:26.08px;white-space:pre;-webkit-text-stroke:0.2px currentColor;color:#1c1c1c;transform-origin:0 21.94px;transform:scaleY(1.09)"><span style="color:#9a9a9a">&#183;</span><span style="color:#9a9a9a">&#183;</span>succes</div>
<div class="a" style="left:5.60px;top:1649.56px;height:30px;line-height:30px;font-family:'Liberation Mono',monospace;font-size:26.08px;white-space:pre;-webkit-text-stroke:0.2px currentColor;color:#9a9a9a;transform-origin:0 21.94px;transform:scaleY(1.09);z-index:2;">0130</div>
<div class="a" style="left:98.40px;top:1649.56px;height:30px;line-height:30px;font-family:'Liberation Mono',monospace;font-size:26.08px;white-space:pre;-webkit-text-stroke:0.2px currentColor;color:#1c1c1c;transform-origin:0 21.94px;transform:scaleY(1.09);z-index:2;">73 0a</div>
<div class="a" style="left:896.00px;top:1649.56px;height:30px;line-height:30px;font-family:'Liberation Mono',monospace;font-size:26.08px;white-space:pre;-webkit-text-stroke:0.2px currentColor;color:#1c1c1c;transform-origin:0 21.94px;transform:scaleY(1.09)">s<span style="color:#9a9a9a">&#183;</span></div>
</body></html>
